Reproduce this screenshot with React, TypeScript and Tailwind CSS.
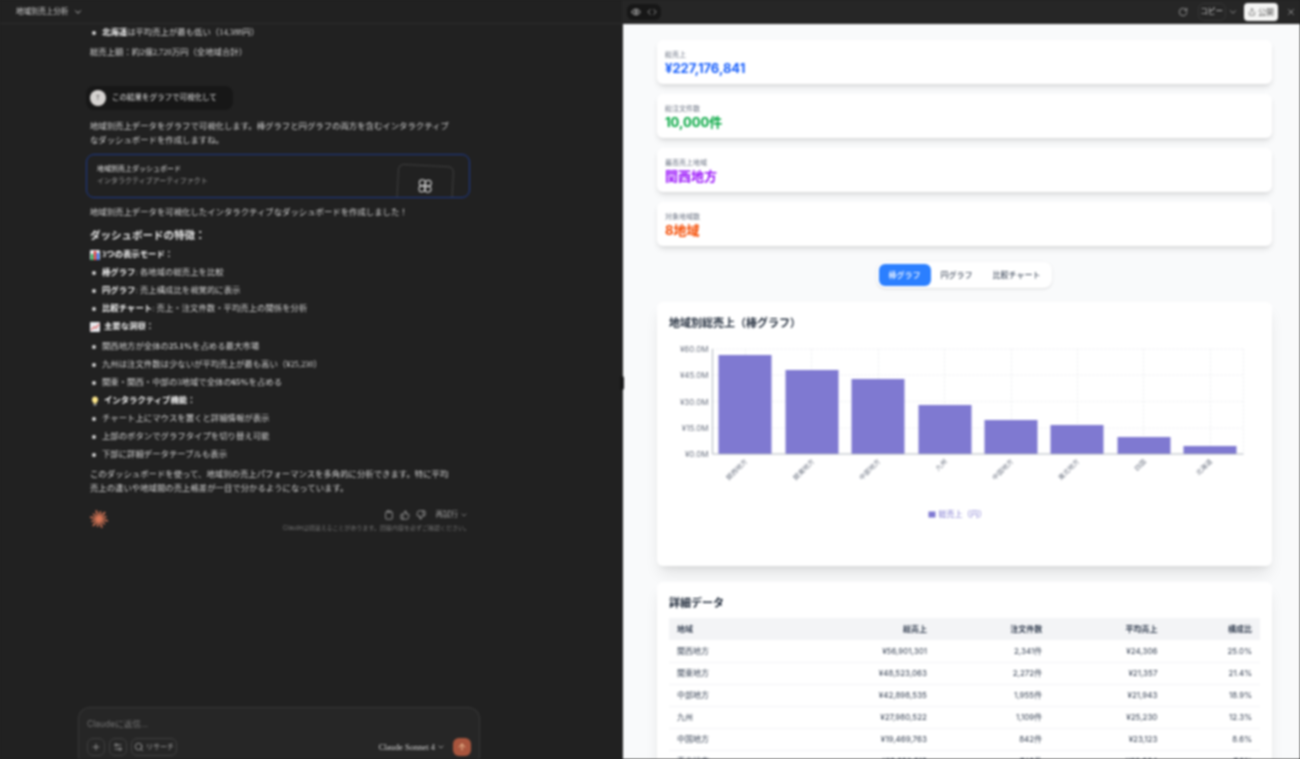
import { ArrowUp, ChevronDown, Clipboard, Code, Eye, Plus, RotateCw, Search, Settings2, Share, ThumbsDown, ThumbsUp, X } from "lucide-react";

const serif = "font-['Liberation_Serif','Noto_Sans_CJK_JP',serif]";
const sans = "font-['Inter','Noto_Sans_CJK_JP',sans-serif]";

const stats = [
  { label: "総売上", value: "¥227,176,841", color: "text-blue-600" },
  { label: "総注文件数", value: "10,000件", color: "text-green-600" },
  { label: "最高売上地域", value: "関西地方", color: "text-purple-600" },
  { label: "対象地域数", value: "8地域", color: "text-orange-600" },
];

const bars = [
  { name: "関西地方", x: 718, top: 355 },
  { name: "関東地方", x: 785, top: 370 },
  { name: "中部地方", x: 851, top: 379 },
  { name: "九州", x: 918, top: 405 },
  { name: "中国地方", x: 984, top: 420 },
  { name: "東北地方", x: 1050, top: 425 },
  { name: "四国", x: 1117, top: 437 },
  { name: "北海道", x: 1183, top: 446 },
];

const rows = [
  ["関西地方", "¥56,901,301", "2,341件", "¥24,306", "25.0%"],
  ["関東地方", "¥48,523,063", "2,272件", "¥21,357", "21.4%"],
  ["中部地方", "¥42,898,535", "1,955件", "¥21,943", "18.9%"],
  ["九州", "¥27,980,522", "1,109件", "¥25,230", "12.3%"],
  ["中国地方", "¥19,469,763", "842件", "¥23,123", "8.6%"],
  ["東北地方", "¥16,682,518", "748件", "¥22,304", "7.3%"],
];

const Bullet = ({ bold, children }: { bold?: string; children: React.ReactNode }) => (
  <li className="mt-1 flex items-center first:mt-0">
    <span className="ml-0.5 mr-1.5 size-1 rounded-full bg-neutral-300" />
    <span>
      {bold && <b className="font-bold text-neutral-100">{bold}</b>}
      {children}
    </span>
  </li>
);

const ChartEmoji = () => (
  <svg viewBox="0 0 10 10" className="size-2.5 shrink-0">
    <rect width="10" height="10" rx="1" fill="#e5e7eb" />
    <rect x="1" y="4" width="2.2" height="6" fill="#16a34a" />
    <rect x="3.9" y="1" width="2.2" height="9" fill="#dc2626" />
    <rect x="6.8" y="3" width="2.2" height="7" fill="#2563eb" />
  </svg>
);

const TrendEmoji = () => (
  <svg viewBox="0 0 10 10" className="size-2.5 shrink-0">
    <rect width="10" height="10" rx="1" fill="#e5e7eb" />
    <path d="M1 8 L4 5 L6 6 L9 2" stroke="#dc2626" strokeWidth="1" fill="none" />
  </svg>
);

const BulbEmoji = () => (
  <svg viewBox="0 0 10 10" className="size-2.5 shrink-0">
    <path d="M5 0.5a3.2 3.2 0 0 0-1.8 5.8V7.5h3.6V6.3A3.2 3.2 0 0 0 5 0.5z" fill="#fde68a" />
    <rect x="3.6" y="8" width="2.8" height="1.5" fill="#9ca3af" />
  </svg>
);

const Spark = () => (
  <svg viewBox="0 0 20 20" className="ml-1 mt-0.5 size-4.5 shrink-0 self-start" stroke="#d97757" strokeWidth="1.8" strokeLinecap="round">
    {Array.from({ length: 12 }).map((_, i) => {
      const a = (i * Math.PI) / 6 + 0.2;
      const r = i % 2 ? 8 : 9.5;
      return <line key={i} x1={10} y1={10} x2={10 + Math.cos(a) * r} y2={10 + Math.sin(a) * r} />;
    })}
  </svg>
);

const Chat = () => (
  <div className="flex h-screen w-[622px] shrink-0 flex-col overflow-hidden bg-[#212121] text-neutral-300">
    <header className={`flex h-6 shrink-0 items-center gap-1 border-b border-neutral-700/40 pl-4 text-[7.5px] text-neutral-300 ${sans}`}>
      地域別売上分析
      <ChevronDown className="size-2.5" />
    </header>

    <main className={`ml-21.5 min-h-0 w-96 flex-1 text-[8.4px] leading-3.5 ${serif}`}>
      <ul className="pl-1 pt-0.5">
        <Bullet bold="北海道">は平均売上が最も低い（14,388円）</Bullet>
      </ul>
      <p className="mt-1.5 pl-1">総売上額：約2億2,720万円（全地域合計）</p>

      <div className={`mt-6.5 flex h-6 w-fit items-center gap-1.5 rounded-lg bg-neutral-900 py-1 pl-1 pr-4 text-[7.5px] text-neutral-200 ${sans}`}>
        <span className="flex size-4 items-center justify-center rounded-full bg-stone-300 text-[6px] text-neutral-700">T</span>
        この結果をグラフで可視化して
      </div>

      <p className="mt-2.5 pl-1 pr-5">地域別売上データをグラフで可視化します。棒グラフと円グラフの両方を含むインタラクティブなダッシュボードを作成しますね。</p>

      <div className={`relative mt-1.5 h-11 overflow-hidden rounded-lg border border-blue-900 px-2.5 pt-2 text-[7px] leading-3 ${sans}`}>
        <p className="text-neutral-200">地域別売上ダッシュボード</p>
        <p className="text-neutral-400">インタラクティブアーティファクト</p>
        <div className="absolute left-77.5 top-2.5 flex h-12 w-14 rotate-3 items-start justify-center rounded-md border border-neutral-700 pt-3 text-neutral-200">
          <svg viewBox="0 0 16 16" className="size-4" fill="none" stroke="currentColor" strokeWidth="1">
            <circle cx="5" cy="5" r="3" />
            <circle cx="11" cy="5" r="3" />
            <circle cx="5" cy="11" r="3" />
            <circle cx="11" cy="11" r="3" />
          </svg>
        </div>
      </div>

      <p className="mt-2 pl-1">地域別売上データを可視化したインタラクティブなダッシュボードを作成しました！</p>
      <h3 className="mt-2 pl-1 text-[10.5px] font-bold leading-4 text-neutral-200">ダッシュボードの特徴：</h3>

      <p className="mt-1 flex items-center gap-0.5 pl-1 font-bold text-neutral-100"><ChartEmoji />3つの表示モード：</p>
      <ul className="mt-1 pl-1">
        <Bullet bold="棒グラフ">: 各地域の総売上を比較</Bullet>
        <Bullet bold="円グラフ">: 売上構成比を視覚的に表示</Bullet>
        <Bullet bold="比較チャート">: 売上・注文件数・平均売上の関係を分析</Bullet>
      </ul>

      <p className="mt-1 flex items-center gap-1 pl-1 font-bold text-neutral-100"><TrendEmoji />主要な洞察：</p>
      <ul className="mt-1.5 pl-1">
        <Bullet>関西地方が全体の<b className="font-bold">25.1%</b>を占める最大市場</Bullet>
        <Bullet>九州は注文件数は少ないが平均売上が最も高い（¥25,230）</Bullet>
        <Bullet>関東・関西・中部の3地域で全体の<b className="font-bold">65%</b>を占める</Bullet>
      </ul>

      <p className="mt-1 flex items-center gap-1 pl-1 font-bold text-neutral-100"><BulbEmoji />インタラクティブ機能：</p>
      <ul className="mt-1 pl-1">
        <Bullet>チャート上にマウスを置くと詳細情報が表示</Bullet>
        <Bullet>上部のボタンでグラフタイプを切り替え可能</Bullet>
        <Bullet>下部に詳細データテーブルも表示</Bullet>
      </ul>

      <p className="mt-1.5 pl-1 pr-5">このダッシュボードを使って、地域別の売上パフォーマンスを多角的に分析できます。特に平均売上の違いや地域間の売上格差が一目で分かるようになっています。</p>

      <div className="mt-3 flex justify-between">
        <Spark />
        <div className={`flex flex-col items-end ${sans}`}>
          <div className="flex h-3.5 items-center gap-1.5 pr-0.5 text-[7.5px] text-neutral-400">
            <Clipboard className="size-2.5" />
            <ThumbsUp className="size-2.5" />
            <ThumbsDown className="size-2.5" />
            <span className="flex items-center gap-0.5 pl-1">再試行<ChevronDown className="size-2" /></span>
          </div>
          <p className="mt-px text-[6px] leading-2.5 text-neutral-500">Claudeは間違えることがあります。回答内容を必ずご確認ください。</p>
        </div>
      </div>
    </main>

    <div className="-mb-2 ml-19.5 h-15 w-[402px] shrink-0 rounded-xl border border-neutral-700/70 bg-neutral-800 px-2 pt-2.5 text-[8.5px]">
      <p className={`leading-3 text-neutral-500 ${sans}`}>Claudeに返信...</p>
      <div className="mt-2 flex items-center gap-1">
        <span className="flex size-4.5 items-center justify-center rounded-md border border-neutral-700 text-neutral-400"><Plus className="size-2.5" /></span>
        <span className="flex size-4.5 items-center justify-center rounded-md border border-neutral-700 text-neutral-400"><Settings2 className="size-2.5" /></span>
        <span className={`flex h-4.5 items-center gap-0.5 rounded-md border border-neutral-700 px-0.5 text-[7px] text-neutral-400 ${sans}`}><Search className="size-2.5" />リサーチ</span>
        <span className={`ml-auto flex items-center gap-0.5 text-neutral-300 ${serif}`}>Claude Sonnet 4<ChevronDown className="size-2" /></span>
        <span className="ml-1 flex size-4.5 items-center justify-center rounded-md bg-[#a8553d] text-orange-200"><ArrowUp className="size-2.5" /></span>
      </div>
    </div>
  </div>
);

const BarChart = () => (
  <svg viewBox="669 340 590 190" className="mt-2.5 h-47.5 w-full">
    {[349, 375, 401.5, 428].map((y) => (
      <line key={y} x1={712} x2={1243} y1={y} y2={y} stroke="#e5e7eb" strokeDasharray="2 2" strokeWidth="0.7" />
    ))}
    {[745, 811, 878, 944, 1011, 1077, 1143, 1210, 1243].map((x) => (
      <line key={x} x1={x} x2={x} y1={349} y2={454} stroke="#e5e7eb" strokeDasharray="2 2" strokeWidth="0.7" />
    ))}
    {bars.map((b) => (
      <rect key={b.name} x={b.x} y={b.top} width={53} height={454 - b.top} fill="#7f79d1" />
    ))}
    <line x1={712} x2={712} y1={349} y2={454} stroke="#9ca3af" strokeWidth="0.8" />
    <line x1={712} x2={1243} y1={454} y2={454} stroke="#9ca3af" strokeWidth="0.8" />
    {[["¥60.0M", 352], ["¥45.0M", 378], ["¥30.0M", 405], ["¥15.0M", 431], ["¥0.0M", 457]].map(([t, y]) => (
      <text key={t} x={708} y={y} textAnchor="end" fontSize="8" fill="#6b7280">{t}</text>
    ))}
    {bars.map((b) => (
      <text key={b.name} x={b.x + 29} y={462} textAnchor="end" fontSize="6.5" fill="#6b7280" transform={`rotate(-45 ${b.x + 29} 462)`}>{b.name}</text>
    ))}
    <rect x={928} y={511.5} width={7} height={6} fill="#7f79d1" />
    <text x={938} y={517} fontSize="8" fill="#7f79d1">総売上（円）</text>
  </svg>
);

const Artifact = () => (
  <div className={`relative flex h-screen min-w-0 flex-1 flex-col overflow-hidden border-l border-neutral-800 bg-gray-50 ${sans}`}>
    <div className="flex h-6 shrink-0 items-center bg-neutral-800 pl-1 pr-1 text-neutral-400">
      <div className="flex h-4 items-center gap-1.5 rounded-md bg-neutral-900 px-1">
        <Eye className="size-2.5 text-neutral-300" />
        <Code className="size-2.5" />
      </div>
      <RotateCw className="ml-auto size-2.5" />
      <span className="ml-2.5 flex h-4.5 items-center rounded-md border border-neutral-700/60 px-0.5 text-[7.5px] text-neutral-300">コピー</span>
      <ChevronDown className="ml-0.5 size-2.5" />
      <span className="ml-1.5 flex h-4.5 items-center gap-0.5 rounded-sm bg-stone-100 px-1 text-[8px] text-neutral-600"><Share className="size-2" />公開</span>
      <X className="ml-2 size-2.5" />
    </div>

    <div className="min-h-0 flex-1 pl-8.5 pr-7 pt-4">
      <div className="flex flex-col gap-2.5">
        {stats.map((s) => (
          <div key={s.label} className="rounded-md bg-white px-2 pb-2 pt-2.5 shadow-md">
            <p className="text-[7px] leading-2.5 text-gray-500">{s.label}</p>
            <p className={`text-[13px] font-bold leading-4 ${s.color}`}>{s.value}</p>
          </div>
        ))}
      </div>

      <div className="mt-4 flex justify-center">
        <div className="flex h-6.5 items-center rounded-lg bg-white p-0.5 text-[8px] font-medium text-gray-600 shadow-sm">
          <span className="flex h-full items-center rounded-md bg-blue-500 px-2.5 text-white">棒グラフ</span>
          <span className="px-2.5">円グラフ</span>
          <span className="px-2.5">比較チャート</span>
        </div>
      </div>

      <section className="mt-3.5 h-66 rounded-md bg-white px-3 pt-3.5 shadow-lg">
        <h2 className="text-[11px] font-semibold leading-3.5 text-gray-800">地域別総売上（棒グラフ）</h2>
        <BarChart />
      </section>

      <section className="mt-4 rounded-md bg-white px-3 pt-3.5 shadow-lg">
        <h2 className="text-[11px] font-semibold leading-3.5 text-gray-800">詳細データ</h2>
        <table className="mt-2 w-full table-fixed text-[8px] text-gray-700">
          <thead>
            <tr className="h-5.5 bg-gray-100">
              <th className="w-[25.5%] px-2 text-left font-semibold">地域</th>
              <th className="w-[19.5%] px-2 text-right font-semibold">総売上</th>
              <th className="w-[19.5%] px-2 text-right font-semibold">注文件数</th>
              <th className="w-[19.5%] px-2 text-right font-semibold">平均売上</th>
              <th className="px-2 text-right font-semibold">構成比</th>
            </tr>
          </thead>
          <tbody>
            {rows.map((r) => (
              <tr key={r[0]} className="h-5.5 border-b border-gray-100">
                {r.map((c, i) => (
                  <td key={i} className={`px-2 ${i === 0 ? "text-left" : "text-right"}`}>{c}</td>
                ))}
              </tr>
            ))}
          </tbody>
        </table>
      </section>
    </div>
  </div>
);

export default function App() {
  return (
    <div className="h-screen overflow-hidden bg-[#212121]">
      <div className="relative flex h-screen overflow-hidden blur-[0.8px]">
        <Chat />
        <Artifact />
        <div className="absolute left-155 top-94 h-3.5 w-1 rounded-sm bg-neutral-900" />
      </div>
    </div>
  );
}
